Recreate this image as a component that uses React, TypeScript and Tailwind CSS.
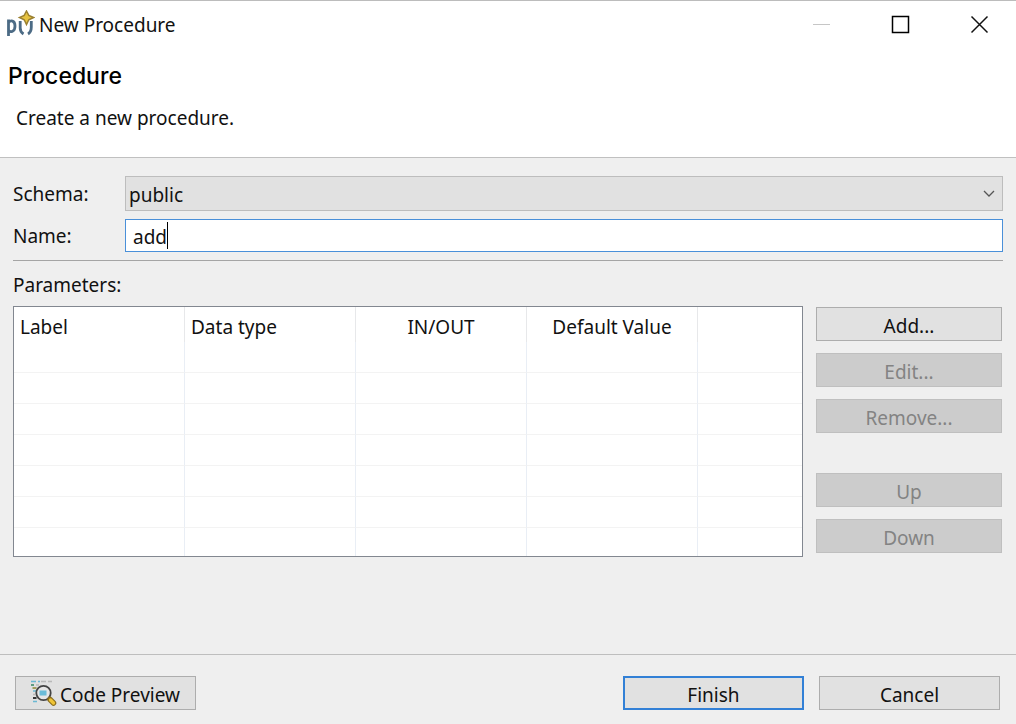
import React, { useState } from "react";

const columns = [
  { name: "Label", align: "text-left", width: "w-[171px]" },
  { name: "Data type", align: "text-left", width: "w-[171px]" },
  { name: "IN/OUT", align: "text-center", width: "w-[171px]" },
  { name: "Default Value", align: "text-center", width: "w-[171px]" },
  { name: "", align: "text-left", width: "" },
];

function AppIcon() {
  return (
    <svg width="29" height="30" viewBox="0 0 29 30" fill="none" aria-hidden="true">
      <path d="M2.500 9.500v16.500" stroke="#4c6b85" strokeWidth="2.800" />
      <path d="M2.500 12.500c2-2.500 6.500-2.500 6.500 3.500s-4.500 6.500-6.500 4.500" stroke="#4c6b85" strokeWidth="2.800" />
      <path d="M14.200 11v7c0 3 .8 4.500 3.300 6" stroke="#4c6b85" strokeWidth="2.800" />
      <path d="M25.300 11v6c0 3.500-.8 5.500-3.300 7" stroke="#4c6b85" strokeWidth="2.800" />
      <path d="M20.500 1l2.300 4.400 4.700 2.100-4.700 2.200-2.300 4.800-2.300-4.800-4.700-2.200 4.700-2.100z" fill="#e6c23f" stroke="#9b8030" strokeWidth="1.500" />
    </svg>
  );
}

function PreviewIcon() {
  return (
    <svg width="26" height="28" viewBox="0 0 26 28" fill="none" aria-hidden="true">
      <path d="M0 2.500h5M7 2.500h2M2 12h3M2 22.500h4" stroke="#6bb9d3" strokeWidth="1.500" />
      <path d="M10 2.500h5M17 2.500h4M5 6h3M2 15.500h2" stroke="#b9b9b9" strokeWidth="1.500" />
      <path d="M0 6h3" stroke="#4f9678" strokeWidth="1.800" />
      <path d="M1.500 9h4" stroke="#8c8a35" strokeWidth="1.500" />
      <path d="M2 19h3.500" stroke="#222" strokeWidth="1.800" />
      <circle cx="12.500" cy="14" r="7.200" fill="#e6e6e6" stroke="#444" strokeWidth="1.800" />
      <rect x="8.500" y="11.500" width="7" height="5" fill="#6bbcd8" />
      <path d="M19 20.500l3.500 3.500" stroke="#8a6d1d" strokeWidth="5.500" strokeLinecap="round" />
      <path d="M19.500 21l3 3" stroke="#efc437" strokeWidth="3.300" strokeLinecap="round" />
    </svg>
  );
}

function SideButton({ children, disabled = false }: { children: React.ReactNode; disabled?: boolean }) {
  return (
    <button
      type="button"
      disabled={disabled}
      className="h-[34px] w-full border border-[#adadad] bg-[#e1e1e1] pt-[3px] leading-6 disabled:border-[#bfbfbf] disabled:bg-[#cccccc] disabled:text-[#838383]"
    >
      {children}
    </button>
  );
}

export default function App() {
  const [name, setName] = useState("add");

  return (
    <main className="flex min-h-screen flex-col border-t border-[#bcbcbc] bg-[#efefef] font-['Noto_Sans',sans-serif] text-[19px] leading-6 text-[#111]">
      <header className="h-[157px] border-b border-[#c0c0c0] bg-white">
        <div className="flex h-12 items-center justify-between pr-[27px] pl-[6px]">
          <div className="flex items-center gap-1">
            <AppIcon />
            <span>New Procedure</span>
          </div>
          <div className="flex items-center gap-[59px] pb-[3px]">
            <button type="button" aria-label="Minimize" disabled>
              <svg className="block" width="20" height="20" viewBox="0 0 20 20" fill="none">
                <path d="M2 10.500h17" stroke="#c6c6c6" strokeWidth="1" />
              </svg>
            </button>
            <button type="button" aria-label="Maximize">
              <svg className="block" width="20" height="20" viewBox="0 0 20 20" fill="none">
                <rect x="2.500" y="2.500" width="16" height="16" stroke="#000" strokeWidth="1.500" />
              </svg>
            </button>
            <button type="button" aria-label="Close">
              <svg className="block" width="20" height="20" viewBox="0 0 20 20" fill="none">
                <path d="M2.500 2.500l16 16M18.500 2.500l-16 16" stroke="#111" strokeWidth="1.500" />
              </svg>
            </button>
          </div>
        </div>
        <h1 className="mt-[13px] px-2 font-['Inter',sans-serif] text-[23px] leading-7 font-medium text-black">Procedure</h1>
        <p className="mt-4 px-4">Create a new procedure.</p>
      </header>

      <form className="flex flex-1 flex-col" onSubmit={(e) => e.preventDefault()}>
        <div className="flex-1 px-[13px] pt-[18px] pb-4">
          <div className="grid grid-cols-[112px_1fr] items-center gap-y-2">
            <label htmlFor="schema">Schema:</label>
            <div className="relative">
              <select
                id="schema"
                defaultValue="public"
                className="block h-[35px] w-full appearance-none border border-[#bdbdbd] bg-[#e1e1e1] px-[3px] pt-[3px] leading-6"
              >
                <option>public</option>
              </select>
              <svg className="pointer-events-none absolute top-3 right-2" width="12" height="10" viewBox="0 0 12 10" fill="none">
                <path d="M1 3l5 5 5-5" stroke="#555" strokeWidth="1.300" />
              </svg>
            </div>
            <label htmlFor="name">Name:</label>
            <div className="relative">
              <input
                id="name"
                value={name}
                onChange={(e) => setName(e.target.value)}
                className="block h-[33px] w-full border border-[#4a90d9] bg-white px-[7px] pt-[3px] leading-6 outline-none"
              />
              {name === "add" && (
                <span aria-hidden="true" className="pointer-events-none absolute inset-y-[3px] left-[42px] w-px bg-black" />
              )}
            </div>
          </div>
          <hr className="mt-2 border-[#a5a5a5]" />

          <h2 id="parameters" className="mt-3 mb-[9px]">Parameters:</h2>
          <div className="flex items-start gap-[13px] pr-px">
            <div className="min-w-0 flex-1 border border-[#828790] bg-white">
              <table aria-labelledby="parameters" className="w-full table-fixed border-separate border-spacing-0">
                <thead>
                  <tr className="h-[35px]">
                    {columns.map((c, i) => (
                      <th
                        key={i}
                        className={`border-r border-[#e7e8ea] px-[6px] pt-1 pb-0 font-normal last:border-r-0 ${c.align} ${c.width}`}
                      >
                        {c.name}
                      </th>
                    ))}
                  </tr>
                </thead>
                <tbody>
                  {Array.from({ length: 7 }, (_, row) => (
                    <tr key={row} className="group h-[31px] last:h-7">
                      {columns.map((_, i) => (
                        <td
                          key={i}
                          className="border-r border-b border-r-[#e9eef5] border-b-[#f3f3f3] p-0 group-last:border-b-0 last:border-r-0"
                        />
                      ))}
                    </tr>
                  ))}
                </tbody>
              </table>
            </div>
            <div className="flex w-[186px] flex-col gap-3 pt-px">
              <SideButton>Add...</SideButton>
              <SideButton disabled>Edit...</SideButton>
              <SideButton disabled>Remove...</SideButton>
              <div className="mt-7 flex flex-col gap-3">
                <SideButton disabled>Up</SideButton>
                <SideButton disabled>Down</SideButton>
              </div>
            </div>
          </div>
        </div>

        <footer className="flex h-[70px] items-start gap-[15px] border-t border-[#bebebe] pt-[21px] pr-4 pl-[15px]">
          <button
            type="button"
            className="mr-auto flex h-[34px] w-[181px] items-center justify-center gap-[3px] border border-[#adadad] bg-[#e1e1e1]"
          >
            <PreviewIcon />
            <span className="pt-[3px] whitespace-nowrap">Code Preview</span>
          </button>
          <button type="submit" className="h-[34px] w-[181px] border-2 border-[#3280d6] bg-[#e1e1e1] pt-[3px]">
            Finish
          </button>
          <button type="button" className="h-[34px] w-[181px] border border-[#adadad] bg-[#e1e1e1] pt-[3px]">
            Cancel
          </button>
        </footer>
      </form>
    </main>
  );
}
